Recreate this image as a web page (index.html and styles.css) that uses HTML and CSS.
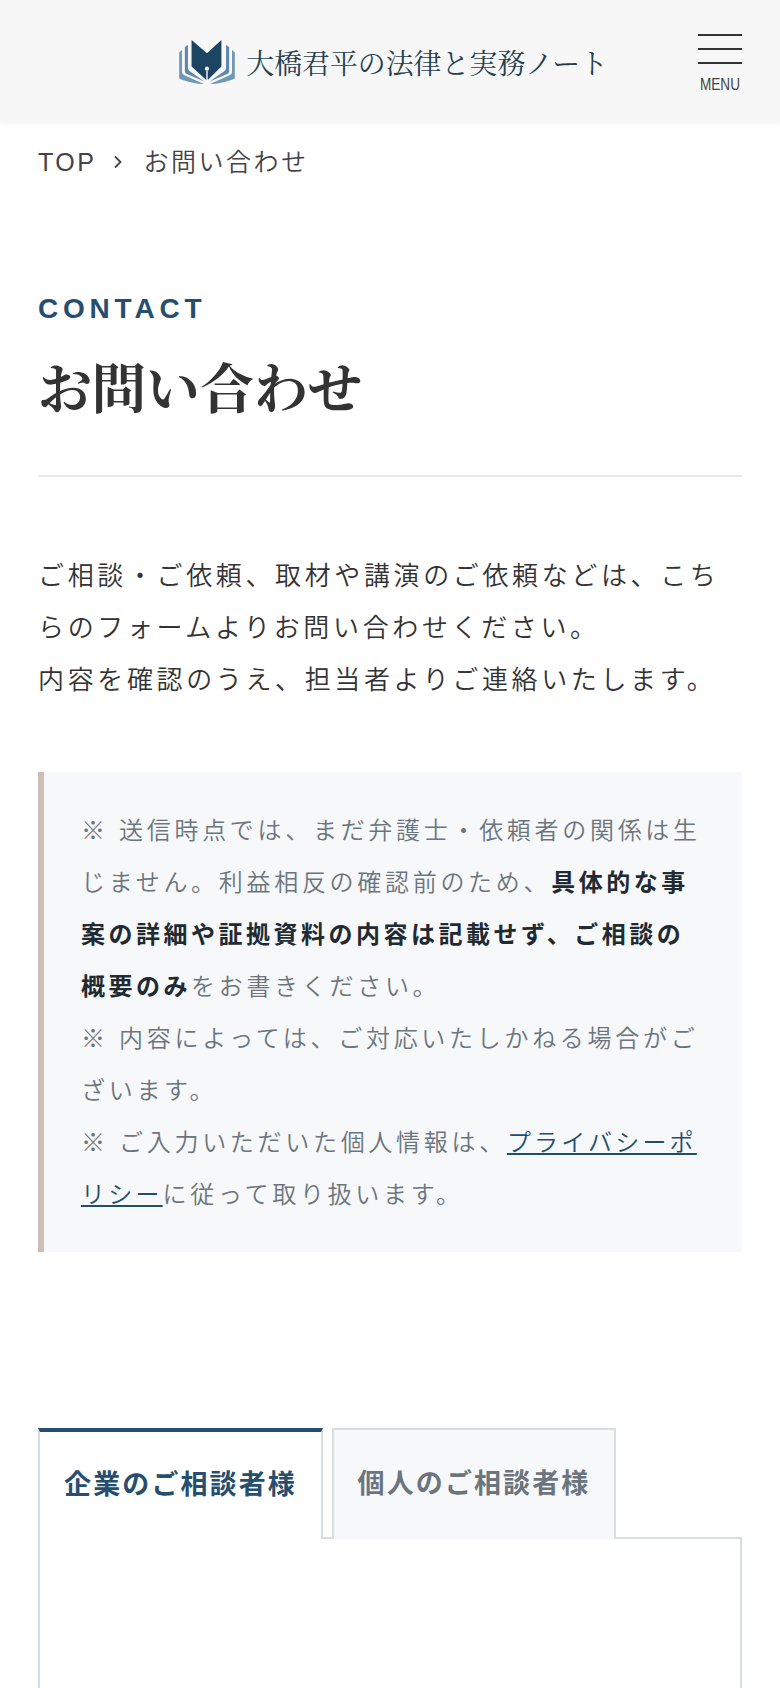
FILE: index.html
```html
<!DOCTYPE html>
<html lang="ja">
<head>
<meta charset="utf-8">
<title>お問い合わせ</title>
<link rel="stylesheet" href="styles.css">
</head>
<body>
<div class="page">
<header class="site-header">
  <a class="logo" href="#">
    <svg class="logo-mark" viewBox="0 0 68 54" aria-hidden="true">
      <path class="leaf-out" d="M7 15.500L9.700 13.500V34.500C9.700 36.500 10.500 37.300 12.500 38.200L31 46.500C25 46.500 14 44 7 41Z"/>
      <path class="leaf-out" d="M61 15.500L58.300 13.500V34.500C58.300 36.500 57.500 37.300 55.500 38.200L37 46.500C43 46.500 54 44 61 41Z"/>
      <path class="leaf-in" d="M12.500 10.500L15.500 8.500V30.500C15.500 32.500 16.500 33.700 18 34.500L31.500 44L14.500 36.800C13 36 12.500 35 12.500 33.500Z"/>
      <path class="leaf-in" d="M55.500 10.500L52.500 8.500V30.500C52.500 32.500 51.500 33.700 50 34.500L36.500 44L53.500 36.800C55 36 55.500 35 55.500 33.500Z"/>
      <path class="nib" d="M19 3.700L34 16.500L48 3.700V29.500L34.700 42.500V33.500H33.300V42.500L19 29.500Z"/>
      <circle class="nib-hole" cx="34" cy="31.500" r="2"/>
    </svg>
    <span class="logo-text">大橋君平の法律と実務ノート</span>
  </a>
  <button class="menu" type="button">
    <span class="menu-bar"></span>
    <span class="menu-bar"></span>
    <span class="menu-bar"></span>
    <span class="menu-label">MENU</span>
  </button>
</header>

<nav class="crumbs">
  <a href="#">TOP</a>
  <svg class="crumb-sep" viewBox="0 0 10 14" aria-hidden="true"><path d="M2 1.500L7.500 7L2 12.500"/></svg>
  <span>お問い合わせ</span>
</nav>

<main class="content">
  <p class="eyebrow">CONTACT</p>
  <h1 class="title">お問い合わせ</h1>
  <p class="intro">ご相談・ご依頼、取材や講演のご依頼などは、こちらのフォームよりお問い合わせください。<br>内容を確認のうえ、担当者よりご連絡いたします。</p>
  <div class="note">
    <p>※ 送信時点では、まだ弁護士・依頼者の関係は生じません。利益相反の確認前のため、<strong>具体的な事案の詳細や証拠資料の内容は記載せず、ご相談の概要のみ</strong>をお書きください。</p>
    <p>※ 内容によっては、ご対応いたしかねる場合がございます。</p>
    <p>※ ご入力いただいた個人情報は、<a href="#">プライバシーポリシー</a>に従って取り扱います。</p>
  </div>
  <div class="tabs">
    <div class="tab tab-active">企業のご相談者様</div>
    <div class="tab tab-idle">個人のご相談者様</div>
  </div>
  <div class="panel"></div>
</main>
</div>
</body>
</html>
```
FILE: styles.css
```css
* { box-sizing: border-box; }
html, body { margin: 0; padding: 0; background: #fff; }
body {
  font-family: "Liberation Sans", "Noto Sans CJK JP", sans-serif;
  color: #333;
}
.page { height: 1688px; overflow: hidden; }
p { margin: 0; }
a { color: inherit; text-decoration: none; }

.site-header {
  height: 122px;
  background: #f7f7f7;
  box-shadow: 0 1px 4px rgba(0,0,0,.05);
  display: flex;
  align-items: flex-start;
  justify-content: flex-end;
  padding: 34px 38px 0 0;
}
.logo {
  display: flex;
  align-items: flex-start;
  gap: 4px;
  margin: 1px 90px 0 0;
}
.logo-mark { width: 70px; height: 56px; display: block; margin-top: 1px; }
.leaf-out { fill: #6f97b8; }
.leaf-in { fill: #5c88ab; }
.nib { fill: #1c4463; }
.nib-hole { fill: #fff; }
.logo-text {
  margin-top: 9px;
  font-family: "Noto Serif CJK JP", "Noto Sans CJK JP", serif;
  font-size: 27.900px;
  line-height: 36px;
  color: #24404f;
  white-space: nowrap;
}
.menu {
  width: 44px;
  padding: 0;
  border: 0;
  background: none;
  display: flex;
  flex-direction: column;
  align-items: stretch;
  gap: 12px;
}
.menu-bar { display: block; height: 2px; background: #333; }
.menu-label {
  margin: 1px -6px 0;
  font-family: "Liberation Sans", sans-serif;
  font-size: 17px;
  line-height: 16px;
  color: #444;
  text-align: center;
  transform: scaleX(.8);
}

.crumbs {
  display: flex;
  align-items: center;
  padding: 22px 38px 0;
  font-size: 25px;
  font-weight: 350;
  line-height: 36px;
  letter-spacing: 2.500px;
  color: #444;
}
.crumb-sep {
  width: 10px;
  height: 14px;
  margin: 0 20px 0 17px;
  fill: none;
  stroke: #444;
  stroke-width: 1.800;
}

.content { padding: 0 38px; }
.eyebrow {
  margin-top: 112px;
  font-family: "Liberation Sans", sans-serif;
  font-weight: 700;
  font-size: 28px;
  line-height: 34px;
  letter-spacing: 4.800px;
  color: #264e6e;
}
.title {
  margin: 24px 0 0;
  padding-bottom: 53px;
  border-bottom: 2px solid #e8e8e8;
  font-family: "Noto Serif CJK JP", "Noto Sans CJK JP", serif;
  font-weight: 700;
  font-size: 54px;
  line-height: 72px;
  color: #333;
}
.intro {
  margin-top: 73px;
  font-size: 26px;
  font-weight: 350;
  line-height: 52px;
  letter-spacing: 3.630px;
  color: #333;
}
.note {
  margin-top: 66px;
  padding: 33px 34px 31px 37px;
  background: #f6f8fa;
  border-left: 6px solid #cdbdb4;
  font-size: 24px;
  font-weight: 350;
  line-height: 52px;
  letter-spacing: 3.700px;
  color: #6c757d;
}
.note strong { font-weight: 700; color: #212a30; letter-spacing: 3.500px; }
.note a { color: #1f4e6f; text-decoration: underline; letter-spacing: 3.200px; }

.tabs {
  display: flex;
  gap: 9px;
  margin-top: 176px;
  margin-bottom: -2px;
}
.tab {
  width: 284px;
  height: 111px;
  display: flex;
  align-items: center;
  justify-content: center;
  position: relative;
  font-size: 27px;
  font-weight: 700;
  letter-spacing: 2.100px;
  padding-bottom: 6px;
}
.tab-active {
  width: 285px;
  background: #fff;
  color: #264e6e;
  border-top: 4px solid #264e6e;
  border-left: 2px solid #d8dde2;
  border-right: 2px solid #d8dde2;
}
.tab-idle {
  background: #f6f8fa;
  color: #6c757d;
  border: 2px solid #d8dde2;
  border-bottom: 0;
}
.panel {
  height: 300px;
  border: 2px solid #d8dde2;
  background: #fff;
}
```
